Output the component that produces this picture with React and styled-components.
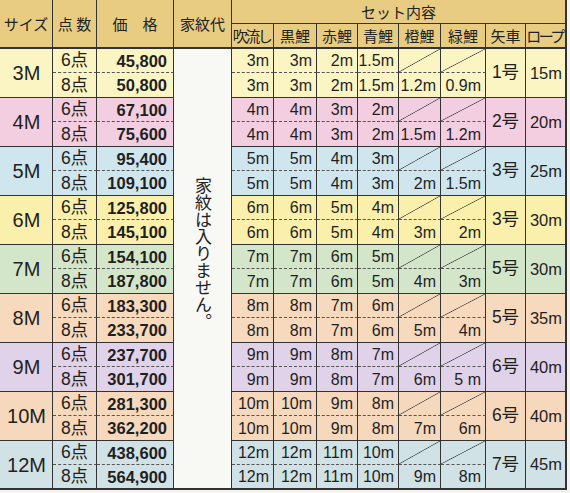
import React from 'react';
import styled, { createGlobalStyle } from 'styled-components';

const GlobalStyle = createGlobalStyle`
  html, body {
    margin: 0;
    padding: 0;
    background: #f4f3ef;
  }
  body {
    font-family: "Liberation Sans", "Noto Sans CJK JP", sans-serif;
    color: #1f1f1f;
  }
`;

const COLS = [53, 44, 77, 58, 42, 43, 41, 41, 42, 45, 40, 41];
const LINE = '#333';

const Table = styled.div`
  display: grid;
  grid-template-columns: ${COLS.map((c) => c + 'px').join(' ')};
  grid-template-rows: 24px 25px repeat(9, 24px 25px);
  width: 567px;
`;

const Cell = styled.div`
  box-sizing: border-box;
  display: flex;
  align-items: center;
  min-width: 0;
  overflow: hidden;
  white-space: nowrap;
  line-height: 1;
  border-right: ${(p) => (p.$edge ? `2px solid ${LINE}` : `1px solid ${LINE}`)};
  border-bottom: ${(p) =>
    p.$end ? `2px solid ${LINE}` : p.$dash ? `1px dashed #555` : `1px solid ${LINE}`};
  background-color: ${(p) => p.$bg || 'transparent'};
`;

const HeadCell = styled(Cell)`
  justify-content: center;
  grid-row: span ${(p) => p.$rows || 1};
  grid-column: span ${(p) => p.$cols || 1};
  background-color: #e7cc82;
  font-family: "Noto Sans CJK JP", sans-serif;
  font-size: 15px;
  letter-spacing: ${(p) => (p.$tight ? '-2.5px' : '0')};
  color: #222;
  padding-right: ${(p) => (p.$tight ? '2px' : '0')};
`;

const SizeCell = styled(Cell)`
  grid-row: span 2;
  justify-content: center;
  font-size: 20px;
  padding-left: 1px;
`;

const CountCell = styled(Cell)`
  justify-content: center;
  font-size: 17.5px;
  padding-top: 1px;
`;

const PriceCell = styled(Cell)`
  justify-content: flex-end;
  padding-right: 6px;
  font-size: 16.5px;
  font-weight: bold;
  padding-top: 1px;
`;

const KamonCell = styled(Cell)`
  grid-row: span 18;
  justify-content: center;
  background-color: #f8f8f5;
  padding-bottom: 30px;
`;

const VerticalText = styled.span`
  writing-mode: vertical-rl;
  font-family: "Noto Sans CJK JP", sans-serif;
  font-size: 17px;
  color: #222;
  margin-left: 2px;
`;

const FishCell = styled(Cell)`
  justify-content: flex-end;
  padding-right: 4px;
  font-size: 16px;
  padding-top: 1px;
  ${(p) =>
    p.$diag &&
    `background-image: linear-gradient(to bottom right, transparent calc(50% - 0.7px), #4a4a4a 50%, transparent calc(50% + 0.7px));`}
`;

const ShaftCell = styled(Cell)`
  grid-row: span 2;
  justify-content: center;
  font-size: 17.5px;
`;

const RopeCell = styled(Cell)`
  grid-row: span 2;
  justify-content: center;
  font-size: 16.5px;
  padding-left: 1px;
`;

const groups = [
  { size: '3M', bg: '#fbf4c3', prices: ['45,800', '50,800'], fish: ['3m', '3m', '2m', '1.5m'], extra: ['1.2m', '0.9m'], shaft: '1号', rope: '15m' },
  { size: '4M', bg: '#f3cee0', prices: ['67,100', '75,600'], fish: ['4m', '4m', '3m', '2m'], extra: ['1.5m', '1.2m'], shaft: '2号', rope: '20m' },
  { size: '5M', bg: '#cfe6ee', prices: ['95,400', '109,100'], fish: ['5m', '5m', '4m', '3m'], extra: ['2m', '1.5m'], shaft: '3号', rope: '25m' },
  { size: '6M', bg: '#faefab', prices: ['125,800', '145,100'], fish: ['6m', '6m', '5m', '4m'], extra: ['3m', '2m'], shaft: '3号', rope: '30m' },
  { size: '7M', bg: '#d4e6ca', prices: ['154,100', '187,800'], fish: ['7m', '7m', '6m', '5m'], extra: ['4m', '3m'], shaft: '5号', rope: '30m' },
  { size: '8M', bg: '#f7d9be', prices: ['183,300', '233,700'], fish: ['8m', '8m', '7m', '6m'], extra: ['5m', '4m'], shaft: '5号', rope: '35m' },
  { size: '9M', bg: '#dfd2e9', prices: ['237,700', '301,700'], fish: ['9m', '9m', '8m', '7m'], extra: ['6m', '5 m'], shaft: '6号', rope: '40m' },
  { size: '10M', bg: '#f6d8bd', prices: ['281,300', '362,200'], fish: ['10m', '10m', '9m', '8m'], extra: ['7m', '6m'], shaft: '6号', rope: '40m' },
  { size: '12M', bg: '#d0e2e5', prices: ['438,600', '564,900'], fish: ['12m', '12m', '11m', '10m'], extra: ['9m', '8m'], shaft: '7号', rope: '45m' },
];

const subHeads = ['吹流し', '黒鯉', '赤鯉', '青鯉', '橙鯉', '緑鯉', '矢車', 'ロープ'];

const App = () => {
  return (
    <>
      <GlobalStyle />
      <Table>
        <HeadCell $rows={2} $end>サイズ</HeadCell>
        <HeadCell $rows={2} $end>点 数</HeadCell>
        <HeadCell $rows={2} $end>価　格</HeadCell>
        <HeadCell $rows={2} $end>家紋代</HeadCell>
        <HeadCell $cols={8} $edge>セット内容</HeadCell>
        {subHeads.map((h, i) => (
          <HeadCell
            key={h}
            $end
            $tight={h.length > 2}
            $edge={i === subHeads.length - 1}
          >
            {h}
          </HeadCell>
        ))}

        {groups.map((g, gi) => {
          const last = gi === groups.length - 1;
          return (
            <React.Fragment key={g.size}>
              <SizeCell $bg={g.bg} $end={last}>{g.size}</SizeCell>
              <CountCell $bg={g.bg} $dash>6点</CountCell>
              <PriceCell $bg={g.bg} $dash>{g.prices[0]}</PriceCell>
              {gi === 0 && (
                <KamonCell $end>
                  <VerticalText>家紋は入りません。</VerticalText>
                </KamonCell>
              )}
              {g.fish.map((f, i) => (
                <FishCell key={'a' + i} $bg={g.bg} $dash>{f}</FishCell>
              ))}
              <FishCell $bg={g.bg} $dash $diag />
              <FishCell $bg={g.bg} $dash $diag />
              <ShaftCell $bg={g.bg} $end={last}>{g.shaft}</ShaftCell>
              <RopeCell $bg={g.bg} $end={last} $edge>{g.rope}</RopeCell>

              <CountCell $bg={g.bg} $end={last}>8点</CountCell>
              <PriceCell $bg={g.bg} $end={last}>{g.prices[1]}</PriceCell>
              {g.fish.concat(g.extra).map((f, i) => (
                <FishCell key={'b' + i} $bg={g.bg} $end={last}>{f}</FishCell>
              ))}
            </React.Fragment>
          );
        })}
      </Table>
    </>
  );
};

export default App;
